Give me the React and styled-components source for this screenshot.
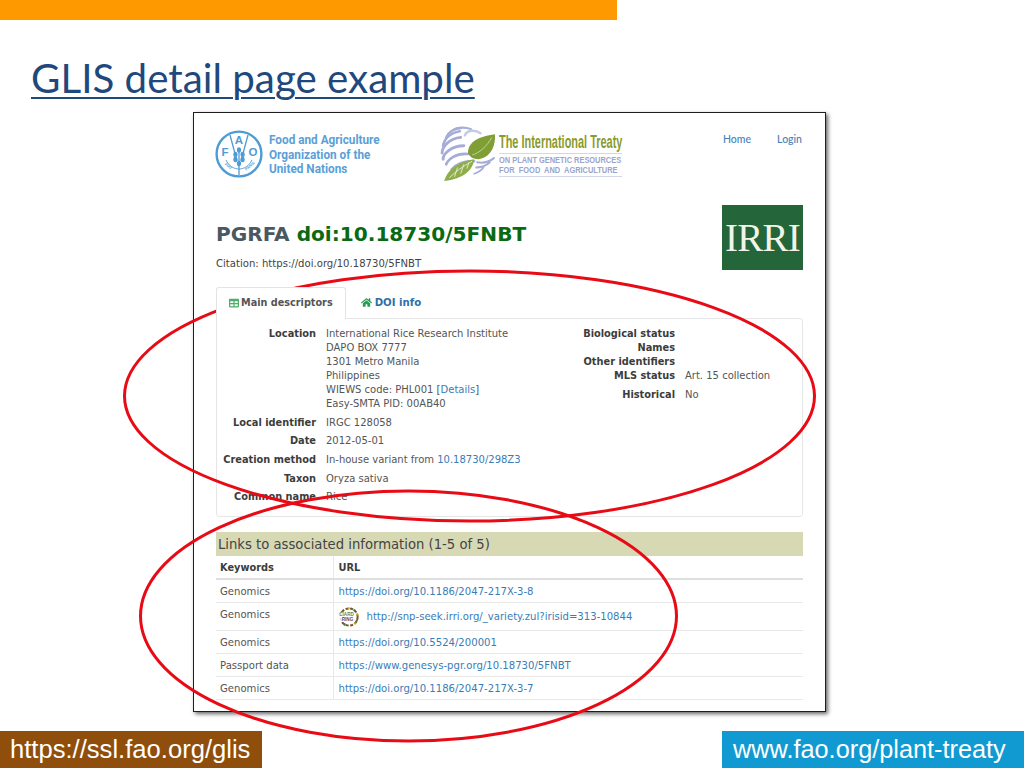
import React from 'react';
import styled, { createGlobalStyle } from 'styled-components';
import { FaHome, FaTable } from 'react-icons/fa';

const GlobalStyle = createGlobalStyle`
  html, body {
    margin: 0;
    padding: 0;
    background: #fff;
  }
`;

const Slide = styled.div`
  position: relative;
  width: 1024px;
  height: 768px;
  overflow: hidden;
  display: flex;
  flex-direction: column;
  background: #fff;
`;

const TopBar = styled.div`
  width: 617px;
  height: 20px;
  flex: none;
  background: #ff9900;
`;

const Title = styled.h1`
  margin: 33px 0 0 31px;
  height: 59px;
  font: 400 40.3px/50px Lato, "Open Sans", sans-serif;
  color: #1f497d;
  width: fit-content;
  text-decoration: underline;
  text-decoration-thickness: 2px;
  text-underline-offset: 4px;
`;

const Frame = styled.div`
  box-sizing: border-box;
  width: 633px;
  height: 600px;
  flex: none;
  margin-left: 193px;
  padding: 12px 22px 0 22px;
  border: 1px solid #1e1e1e;
  box-shadow: 2px 2px 4px rgba(0, 0, 0, 0.6);
  background: #fff;
  font-family: "DejaVu Sans", Verdana, sans-serif;
  color: #444;
`;

const Header = styled.div`
  display: flex;
  align-items: flex-start;
  height: 68px;
`;

const LogoGroup = styled.div`
  display: flex;
  align-items: center;
  height: 58px;
  margin-left: -1px;
`;

const FaoText = styled.div`
  margin-left: 6px;
  padding-top: 2px;
  width: 114px;
  font: 700 12.4px/14.6px Roboto, sans-serif;
  color: #5aa0d6;
  white-space: nowrap;

  span {
    display: block;
    width: fit-content;
    transform: scaleX(0.95);
    transform-origin: left center;
  }
`;

const TreatyGroup = styled(LogoGroup)`
  margin-left: 57px;
`;

const TreatyText = styled.div`
  width: 124px;
  margin-left: 1px;
  white-space: nowrap;
`;

const TreatyName = styled.div`
  width: fit-content;
  font: 700 17.5px/22px "Liberation Sans", sans-serif;
  color: #8a9a2c;
  transform: scaleX(0.625);
  transform-origin: left center;
`;

const TreatySub = styled.div`
  width: 123px;
  padding: 1px 0;
  border-top: 1px solid #d4d7e6;
  border-bottom: 1px solid #d4d7e6;
`;

const TreatySubLine = styled.div`
  width: fit-content;
  font: 700 9px/10px "Liberation Sans", sans-serif;
  color: #9aa5cc;
  word-spacing: ${(p) => p.$words}px;
  transform: scaleX(0.825);
  transform-origin: left center;
`;

const Nav = styled.nav`
  margin-left: auto;
  margin-right: 1px;
  padding-top: 7px;
  display: flex;
  gap: 26px;
  font: 500 10.5px/14px Lato, sans-serif;
  color: #4a7fb8;
`;

const DoiRow = styled.div`
  display: flex;
  align-items: flex-start;
  justify-content: space-between;
  height: 94px;
`;

const DoiHeading = styled.h2`
  margin: 27px 0 0;
  font: 700 20.1px/28px "DejaVu Sans", sans-serif;
  color: #4a5860;

  b {
    color: #0a6a14;
  }
`;

const Citation = styled.div`
  margin-top: 9px;
  font-size: 10.1px;
  line-height: 14px;
  color: #444;
`;

const IrriBox = styled.div`
  width: 81px;
  height: 65px;
  margin-top: 12px;
  background: #24663a;
  color: #f2f4ea;
  font: 400 39px/65px "Liberation Serif", serif;
  letter-spacing: -0.8px;
  text-align: center;
`;

const Tabs = styled.div`
  display: flex;
  height: 31px;
  position: relative;
  z-index: 1;
`;

const Tab = styled.div`
  box-sizing: border-box;
  display: flex;
  align-items: center;
  gap: ${(p) => (p.$active ? '2px' : '3px')};
  height: ${(p) => (p.$active ? '32px' : '31px')};
  padding: 0 12px 2px ${(p) => (p.$active ? '12px' : '14px')};
  font-size: ${(p) => (p.$active ? '9.7px' : '10.2px')};
  font-weight: 700;
  color: ${(p) => (p.$active ? '#555' : '#2f6fa8')};
  background: ${(p) => (p.$active ? '#fff' : 'transparent')};
  border: ${(p) => (p.$active ? '1px solid #e3e3e3' : '1px solid transparent')};
  border-bottom: 0;
  border-radius: 3px 3px 0 0;
  svg {
    flex: none;
  }
`;

const Panel = styled.div`
  box-sizing: border-box;
  display: flex;
  height: 199px;
  padding-top: 8px;
  border: 1px solid #e6e6e6;
  border-radius: 0 3px 3px 3px;
`;

const Column = styled.div`
  width: ${(p) => p.$width}px;
  flex: none;
`;

const Field = styled.div`
  display: grid;
  grid-template-columns: ${(p) => p.$label}px 1fr;
  column-gap: 10px;
  margin-bottom: ${(p) => p.$gap ?? 4.7}px;
  font-size: 10px;
  line-height: 14px;
`;

const Label = styled.div`
  text-align: right;
  font-size: 9.8px;
  font-weight: 700;
  color: #3c3c3c;
  white-space: nowrap;
`;

const Value = styled.div`
  color: #555;
  white-space: nowrap;
`;

const Link = styled.span`
  color: #3a7cb5;
`;

const LinksPanel = styled.div`
  margin-top: 15px;
`;

const LinksHeading = styled.div`
  height: 24px;
  padding-left: 2px;
  background: #d6d9b4;
  font-size: 13.2px;
  line-height: 25px;
  color: #444;
`;

const Table = styled.table`
  width: 100%;
  table-layout: fixed;
  border-collapse: collapse;
  font-size: 10.1px;
  color: #555;

  col:first-child {
    width: 117px;
  }
  th, td {
    box-sizing: border-box;
    padding: 1px 0 0 4px;
    text-align: left;
    white-space: nowrap;
    border-bottom: 1px solid #e8e8e8;
    border-right: 1px solid #e8e8e8;
    height: 23px;
  }
  th {
    font-size: 9.8px;
    color: #3c3c3c;
    border-bottom: 2px solid #dedede;
  }
  td:last-child, th:last-child {
    padding-left: 5px;
    border-right: 0;
  }
  tr.tall td {
    height: 28px;
    vertical-align: top;
    padding-top: 6px;
  }
`;

const RingLine = styled.span`
  display: flex;
  align-items: center;
  gap: 8px;
  margin-top: -2px;
`;

const Footer = styled.div`
  display: flex;
  justify-content: space-between;
  margin-top: auto;
  color: #fff;
  font: 400 25.4px/37px "Liberation Sans", sans-serif;
`;

const FooterTag = styled.div`
  box-sizing: border-box;
  width: ${(p) => p.$width}px;
  height: 37px;
  padding-left: ${(p) => p.$pad}px;
  font-size: ${(p) => p.$size}px;
  background: ${(p) => p.$bg};
  white-space: nowrap;
`;

const Rings = styled.svg`
  position: absolute;
  left: 0;
  top: 0;
  pointer-events: none;
`;

const FaoLogo = () => (
  <svg width="48" height="48" viewBox="0 0 48 48">
    <circle cx="24" cy="24" r="22.4" fill="#fff" stroke="#4f9bd4" strokeWidth="2.4" />
    <g stroke="#4f9bd4" fill="none" strokeWidth="1.3">
      <path d="M24 18v27" />
      <path d="M15 5l7 26M33 5l-7 26" />
      <path d="M11 30c3 6 8 9 13 9s10-3 13-9" strokeWidth="0.9" />
    </g>
    <g fill="#4f9bd4">
      <ellipse cx="24" cy="20" rx="2.1" ry="2.8" />
      <ellipse cx="20.4" cy="24.5" rx="2.1" ry="2.8" />
      <ellipse cx="27.6" cy="24.5" rx="2.1" ry="2.8" />
      <ellipse cx="20.4" cy="29.5" rx="2.1" ry="2.8" />
      <ellipse cx="27.6" cy="29.5" rx="2.1" ry="2.8" />
      <ellipse cx="24" cy="33.5" rx="2.1" ry="2.8" />
    </g>
    <g fill="#4f9bd4" fontFamily="Liberation Sans, sans-serif" fontWeight="700" textAnchor="middle">
      <text x="24" y="14" fontSize="11.5">A</text>
      <text x="10" y="25.5" fontSize="11.5">F</text>
      <text x="38" y="25.5" fontSize="11.5">O</text>
      <text x="12.5" y="37" fontSize="3.8" transform="rotate(40 12.5 37)">FIAT</text>
      <text x="35.5" y="37" fontSize="3.8" transform="rotate(-40 35.5 37)">PANIS</text>
    </g>
  </svg>
);

const TreatyLogo = () => (
  <svg width="58" height="58" viewBox="0 0 56 56">
    <g fill="none" stroke="#a5acd8" strokeLinecap="round">
      <path d="M14 4c4-2 11-2 16 0" strokeWidth="2" />
      <path d="M24 10c2-5 10-6 15-2" strokeWidth="2.4" stroke="#c5cae6" />
      <path d="M6 12c2-5 8-9 14-9" strokeWidth="2.4" />
      <path d="M3 20c1-6 6-12 16-14" strokeWidth="2.6" />
      <path d="M2 27c0-6 7-14 18-15" strokeWidth="2.8" />
      <path d="M3 33c0-6 9-13 20-13" strokeWidth="2.8" />
      <path d="M6 38c2-5 9-11 21-10" strokeWidth="2.6" />
      <path d="M11 43c4-5 12-9 22-8" strokeWidth="2.2" />
      <path d="M36 36c5 1 11 0 16-4" strokeWidth="2" />
      <path d="M35 41c5 0 10-2 13-5" strokeWidth="2" />
      <path d="M33 47c3-1 7-3 9-6" strokeWidth="1.6" />
    </g>
    <path d="M27 27c0-11 11-16 26-18 1 12-5 23-16 24-5 0-8-2-10-6z" fill="#7f9f35" />
    <path d="M31 29c7-2 14-8 19-17" stroke="#d8e3b8" strokeWidth="0.7" fill="none" />
    <path d="M4 54c3-11 14-19 29-21-1 10-10 19-29 21z" fill="#8eae4a" />
    <path d="M9 51c6-6 13-11 22-16M14 50l3-9M20 47l3-9M26 42l2-6" stroke="#e4edcc" strokeWidth="0.9" fill="none" />
  </svg>
);

const RingLogo = () => (
  <svg width="20" height="20" viewBox="0 0 20 20">
    <g fill="none" strokeWidth="2">
      <circle cx="10" cy="10" r="8.6" stroke="#6d5a2b" strokeDasharray="3 1.6" />
      <circle cx="10" cy="10" r="8.6" stroke="#d8a328" strokeDashoffset="5" strokeDasharray="2 9" />
      <circle cx="10" cy="10" r="8.6" stroke="#4a7a3a" strokeDashoffset="11" strokeDasharray="2 12" />
    </g>
    <rect x="0" y="5" width="15" height="10" fill="#fff" opacity="0.85" />
    <g fontFamily="Liberation Sans, sans-serif" fontWeight="700" fontSize="4.6" textAnchor="middle">
      <text x="7.5" y="9" fill="#6c7f4a">CIARD</text>
      <text x="8.5" y="14" fill="#5a4a6a">RING</text>
    </g>
  </svg>
);

const links = [
  { keyword: 'Genomics', url: 'https://doi.org/10.1186/2047-217X-3-8' },
  { keyword: 'Genomics', url: 'http://snp-seek.irri.org/_variety.zul?irisid=313-10844', ring: true },
  { keyword: 'Genomics', url: 'https://doi.org/10.5524/200001' },
  { keyword: 'Passport data', url: 'https://www.genesys-pgr.org/10.18730/5FNBT' },
  { keyword: 'Genomics', url: 'https://doi.org/10.1186/2047-217X-3-7' },
];

const App = () => {
  return (
    <Slide>
      <GlobalStyle />
      <TopBar />
      <Title>GLIS detail page example</Title>
      <Frame>
        <Header>
          <LogoGroup>
            <FaoLogo />
            <FaoText>
              <span>Food and Agriculture</span>
              <span>Organization of the</span>
              <span>United Nations</span>
            </FaoText>
          </LogoGroup>
          <TreatyGroup>
            <TreatyLogo />
            <TreatyText>
              <TreatyName>The International Treaty</TreatyName>
              <TreatySub>
                <TreatySubLine $words={0}>ON PLANT GENETIC RESOURCES</TreatySubLine>
                <TreatySubLine $words={2.5}>FOR FOOD AND AGRICULTURE</TreatySubLine>
              </TreatySub>
            </TreatyText>
          </TreatyGroup>
          <Nav>
            <span>Home</span>
            <span>Login</span>
          </Nav>
        </Header>
        <DoiRow>
          <div>
            <DoiHeading>
              PGRFA <b>doi:10.18730/5FNBT</b>
            </DoiHeading>
            <Citation>Citation: https://doi.org/10.18730/5FNBT</Citation>
          </div>
          <IrriBox>IRRI</IrriBox>
        </DoiRow>
        <Tabs>
          <Tab $active>
            <FaTable size={10} color="#4caf6a" />
            Main descriptors
          </Tab>
          <Tab>
            <FaHome size={11} color="#2c9a58" />
            DOI info
          </Tab>
        </Tabs>
        <Panel>
          <Column $width={293}>
            <Field $label={99}>
              <Label>Location</Label>
              <Value>
                International Rice Research Institute
                <br />
                DAPO BOX 7777
                <br />
                1301 Metro Manila
                <br />
                Philippines
                <br />
                WIEWS code: PHL001 [<Link>Details</Link>]
                <br />
                Easy-SMTA PID: 00AB40
              </Value>
            </Field>
            <Field $label={99}>
              <Label>Local identifier</Label>
              <Value>IRGC 128058</Value>
            </Field>
            <Field $label={99}>
              <Label>Date</Label>
              <Value>2012-05-01</Value>
            </Field>
            <Field $label={99}>
              <Label>Creation method</Label>
              <Value>
                In-house variant from <Link>10.18730/298Z3</Link>
              </Value>
            </Field>
            <Field $label={99}>
              <Label>Taxon</Label>
              <Value>Oryza sativa</Value>
            </Field>
            <Field $label={99}>
              <Label>Common name</Label>
              <Value>Rice</Value>
            </Field>
          </Column>
          <Column $width={292}>
            <Field $label={165} $gap={0}>
              <Label>Biological status</Label>
              <Value />
            </Field>
            <Field $label={165} $gap={0}>
              <Label>Names</Label>
              <Value />
            </Field>
            <Field $label={165} $gap={0}>
              <Label>Other identifiers</Label>
              <Value />
            </Field>
            <Field $label={165}>
              <Label>MLS status</Label>
              <Value>Art. 15 collection</Value>
            </Field>
            <Field $label={165}>
              <Label>Historical</Label>
              <Value>No</Value>
            </Field>
          </Column>
        </Panel>
        <LinksPanel>
          <LinksHeading>Links to associated information (1-5 of 5)</LinksHeading>
          <Table>
            <colgroup>
              <col />
              <col />
            </colgroup>
            <thead>
              <tr>
                <th>Keywords</th>
                <th>URL</th>
              </tr>
            </thead>
            <tbody>
              {links.map((row) => (
                <tr key={row.url} className={row.ring ? 'tall' : undefined}>
                  <td>{row.keyword}</td>
                  <td>
                    {row.ring ? (
                      <RingLine>
                        <RingLogo />
                        <Link>{row.url}</Link>
                      </RingLine>
                    ) : (
                      <Link>{row.url}</Link>
                    )}
                  </td>
                </tr>
              ))}
            </tbody>
          </Table>
        </LinksPanel>
      </Frame>
      <Footer>
        <FooterTag $width={262} $bg="#8f4e0b" $pad={10} $size={25.6}>https://ssl.fao.org/glis</FooterTag>
        <FooterTag $width={302} $bg="#119ad2" $pad={11} $size={25.3}>www.fao.org/plant-treaty</FooterTag>
      </Footer>
      <Rings width="1024" height="768" viewBox="0 0 1024 768" fill="none" stroke="#e80a14" strokeWidth="3">
        <ellipse cx="469.5" cy="396" rx="345" ry="125" />
        <ellipse cx="408.5" cy="616" rx="268" ry="125" />
      </Rings>
    </Slide>
  );
};

export default App;
